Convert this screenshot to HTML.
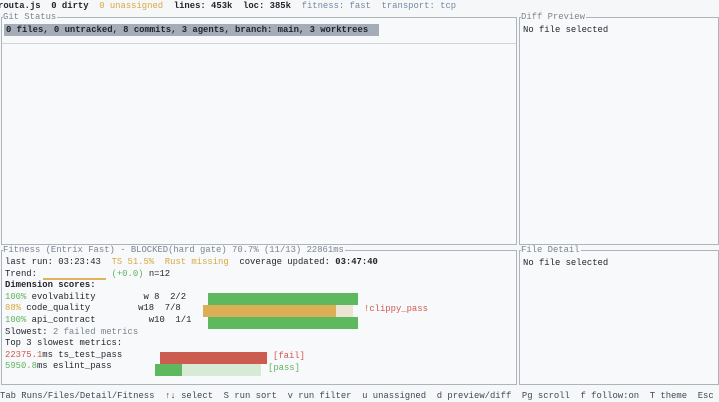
<!DOCTYPE html>
<html><head><meta charset="utf-8"><style>
body{margin:0;width:719px;height:402px;background:#f6f7f9;overflow:hidden;font-family:"Liberation Mono","DejaVu Sans Mono",monospace;font-size:8.9px;color:#22262c;position:relative}
.l{position:absolute;white-space:pre;line-height:11px}
.box{position:absolute;border:1px solid #aeb4bb;background:#f8f9fb}
.t{position:absolute;top:-6px;left:1px;background:#f8f9fb;color:#7c848d;white-space:pre;line-height:11px;padding-right:1px}
.b{font-weight:bold}
.g{color:#5db35e}.y{color:#d9a93e}.r{color:#d0594f}.m{color:#7a8490}.bl{color:#6f8aa3}
.bar{position:absolute;height:12px}
</style></head><body>
<div class="l" style="left:-2px;top:1px"><span class="b">routa.js</span>  <span class="b">0 dirty</span>  <span class="y">0 unassigned</span>  <span class="b">lines: 453k</span>  <span class="b">loc: 385k</span>  <span class="bl">fitness: fast</span>  <span class="bl">transport: tcp</span></div>

<div class="box" style="left:1px;top:17px;width:514px;height:226px">
<div class="t">Git Status</div>
<div style="position:absolute;left:2px;top:6px;width:375px;height:12px;background:#a5aeb8"></div>
<div class="l b" style="left:4px;top:7px">0 files, 0 untracked, 8 commits, 3 agents, branch: main, 3 worktrees</div>
<div style="position:absolute;left:0;right:0;top:25px;height:1px;background:#d2d6db"></div>
</div>

<div class="box" style="left:519px;top:17px;width:198px;height:226px">
<div class="t">Diff Preview</div>
<div class="l" style="left:3px;top:7px">No file selected</div>
</div>

<div class="box" style="left:1px;top:250px;width:514px;height:133px">
<div class="t">Fitness (Entrix Fast) - BLOCKED(hard gate) 70.7% (11/13) 22861ms</div>
<div class="l" style="left:3px;top:6px">last run: 03:23:43  <span class="y">TS 51.5%</span>  <span class="y">Rust missing</span>  coverage updated: <span class="b">03:47:40</span></div>
<div class="l" style="left:3px;top:17.6px">Trend:              <span class="g">(+0.0)</span> n=12</div>
<div style="position:absolute;left:41px;top:27px;width:63px;height:2px;background:#e0b45a"></div>
<div class="l b" style="left:3px;top:29.2px">Dimension scores:</div>
<div class="l" style="left:3px;top:40.8px"><span class="g">100%</span> evolvability         w 8  2/2</div>
<div class="l" style="left:3px;top:52.4px"><span class="y">88%</span> code_quality         w18  7/8</div>
<div class="l" style="left:3px;top:64px"><span class="g">100%</span> api_contract          w10  1/1</div>
<div class="l" style="left:3px;top:75.6px">Slowest: <span class="m">2 failed metrics</span></div>
<div class="l" style="left:3px;top:87.2px">Top 3 slowest metrics:</div>
<div class="l" style="left:3px;top:98.8px"><span class="r">22375.1</span>ms ts_test_pass</div>
<div class="l" style="left:3px;top:110.4px"><span class="g">5950.8</span>ms eslint_pass</div>
<div class="bar" style="left:206px;top:42px;width:150px;background:#5db85e"></div>
<div class="bar" style="left:201px;top:54px;width:133px;background:#dcae56"></div>
<div class="bar" style="left:334px;top:54px;width:17px;background:#ece4d2"></div>
<div class="l r" style="left:362px;top:53px">!clippy_pass</div>
<div class="bar" style="left:206px;top:66px;width:150px;background:#5db85e"></div>
<div class="bar" style="left:158px;top:101px;width:107px;background:#cd5c50"></div>
<div class="l r" style="left:271px;top:100px">[fail]</div>
<div class="bar" style="left:153px;top:113px;width:27px;background:#5db85e"></div>
<div class="bar" style="left:180px;top:113px;width:79px;background:#d6ead6"></div>
<div class="l g" style="left:266px;top:112px">[pass]</div>
</div>

<div class="box" style="left:519px;top:250px;width:198px;height:133px">
<div class="t">File Detail</div>
<div class="l" style="left:3px;top:7px">No file selected</div>
</div>

<div class="l" style="left:0px;top:391px;color:#3c4a5a">Tab Runs/Files/Detail/Fitness  ↑↓ select  S run sort  v run filter  u unassigned  d preview/diff  Pg scroll  f follow:on  T theme  Esc</div>
</body></html>
